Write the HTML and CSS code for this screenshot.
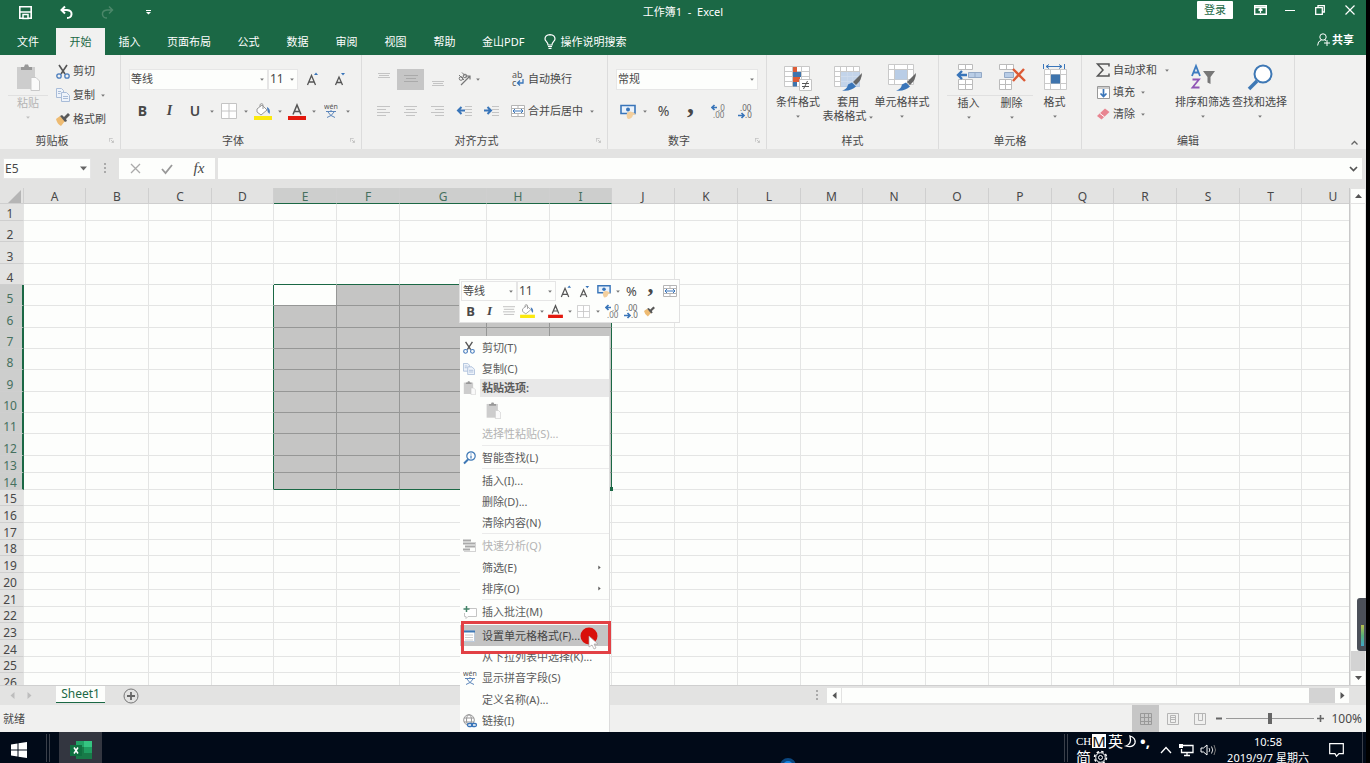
FILE: index.html
```html
<!DOCTYPE html>
<html lang="zh-CN">
<head>
<meta charset="utf-8">
<title>工作簿1 - Excel</title>
<link rel="stylesheet" href="styles.css">
</head>
<body>
<svg class="sprite" aria-hidden="true">
  <symbol id="caret" viewBox="0 0 5 4"><path d="M0 .5h5L2.500 3.500z" fill="#777"/></symbol>
  <symbol id="launch" viewBox="0 0 8 8"><path d="M.5 6V.5H6M3 3l4 4M7 4v3H4" fill="none" stroke="#aaa"/></symbol>
  <symbol id="cut" viewBox="0 0 14 15"><path d="M3 1l6 9M11 1L5 10" stroke="#555" stroke-width="1.600" fill="none"/><circle cx="3" cy="12" r="2.200" fill="none" stroke="#4a7dbd" stroke-width="1.300"/><circle cx="11" cy="12" r="2.200" fill="none" stroke="#4a7dbd" stroke-width="1.300"/></symbol>
  <symbol id="copy" viewBox="0 0 14 14"><path d="M.5.5h5l2 2v7h-7z" fill="#eef3fa" stroke="#a9bcd8"/><path d="M5.500 4.500h5l3 3v6h-8z" fill="#eef3fa" stroke="#a9bcd8"/><path d="M2 3.500h3M2 5.500h2.500M7 8.500h5M7 10.500h5" stroke="#a9bcd8"/></symbol>
  <symbol id="paste" viewBox="0 0 24 27"><path d="M1 3h18v22H1z" fill="#cdcdcd"/><path d="M5 3h3l1-2.500h3L13 3h3v3H5z" fill="#989898"/><path d="M15 13.500h5l3.500 3.500v9.500H15z" fill="#fafafa" stroke="#c9c9c9"/></symbol>
  <symbol id="brush" viewBox="0 0 14 13"><path d="M0 6l4-3 5 5-4 5q-4-2-5-7z" fill="#eebb72"/><path d="M4 3l2-1 2 2 4-4 2 2-4 4 1 2-2 1z" fill="#595959"/></symbol>
  <symbol id="grid4" viewBox="0 0 16 16"><path d="M.5.5h15v15H.5zM8 1v14M1 8h14" fill="#fff" stroke="#c4c4c4"/></symbol>
  <symbol id="bucket" viewBox="0 0 18 17"><path d="M3 6l5-4 5 5-6 5-4-3z" fill="#fff" stroke="#999"/><path d="M6 4V1.500q2-2 3 0V6" fill="none" stroke="#999"/><path d="M13 4q4 2 2.500 7Q13 9 13 5z" fill="#4a7dbd"/><path d="M0 13h18v4H0z" fill="#fbe90f"/></symbol>
  <symbol id="fontcolor" viewBox="0 0 18 17"><path d="M5 11.500L9 2l4 9.500M6.500 8.500h5" fill="none" stroke="#555" stroke-width="1.500"/><path d="M0 13h18v4H0z" fill="#e3190e"/></symbol>
  <symbol id="grow" viewBox="0 0 14 14"><path d="M2.500 13L6.500 3.500l4 9.500M4 10h5" fill="none" stroke="#555" stroke-width="1.300"/><path d="M9 3l2-2.500L13 3z" fill="#3975b9"/></symbol>
  <symbol id="shrink" viewBox="0 0 14 14"><path d="M2.500 13L6 5l3.500 8M4 10.500h4" fill="none" stroke="#555" stroke-width="1.300"/><path d="M8 1l2 2.500L12 1z" fill="#3975b9"/></symbol>
  <symbol id="pinyin" viewBox="0 0 14 14"><text x="7" y="5" text-anchor="middle" font-size="7" fill="#555">wén</text><path d="M2 7.500h10M7 6v2M4 8q2 4 7 5.500M10 8q-2 4-7 5.500" fill="none" stroke="#5c86bb"/></symbol>
  <symbol id="money" viewBox="0 0 16 15"><path d="M1 1.500h14v8H1z" fill="#eaf2fb" stroke="#3975b9" stroke-width="1.600"/><circle cx="8" cy="5.500" r="2" fill="#3975b9"/><path d="M7 9q3-3 7 0l2 1-3 1q-1 4-5 4-2-2-1-6z" fill="#f3cf9d"/></symbol>
  <symbol id="decless" viewBox="0 0 14 15"><path d="M6 3.500H1M3.500 1L1 3.500 3.500 6" fill="none" stroke="#3975b9" stroke-width="1.700"/><text x="7" y="7" font-size="8" fill="#777">.0</text><text x="2" y="14" font-size="8" fill="#777">.00</text></symbol>
  <symbol id="decmore" viewBox="0 0 14 15"><path d="M0 11.500h6M3.500 9L6 11.500 3.500 14" fill="none" stroke="#3975b9" stroke-width="1.700"/><text x="2" y="7" font-size="8" fill="#666">.00</text><text x="7" y="14" font-size="8" fill="#666">.0</text></symbol>
  <symbol id="merge" viewBox="0 0 14 14"><path d="M.5 1.500h13v11H.5zM.5 4.500h13M.5 9.500h13M7 1.500v3M7 9.500v3" fill="#fff" stroke="#b5b5b5"/><path d="M2 7h10M4 5L2 7l2 2M10 5l2 2-2 2" fill="none" stroke="#3975b9"/></symbol>
  <symbol id="lines" viewBox="0 0 14 11"><path d="M0 .5h14M1 3.500h12M0 6.500h14M1 9.500h12" stroke="#b9b9b9"/></symbol>
  <symbol id="tri-left" viewBox="0 0 5 7"><path d="M4.500 0v7L.5 3.500z" fill="currentColor"/></symbol>
  <symbol id="tri-right" viewBox="0 0 5 7"><path d="M.5 0v7l4-3.500z" fill="currentColor"/></symbol>
  <symbol id="tablebrush" viewBox="0 0 28 27"><path d="M.5 2.500h25v20H.5zM.5 7.500h25M.5 12.500h25M.5 17.500h25M6.500 2.500v20M12.500 2.500v20M19.500 2.500v20" fill="#fff" stroke="#c9c9c9"/><path d="M7 8h19v15H7z" fill="#b9cde6" opacity=".85"/><path d="M13 8v14M19 8v14M7 12.500h18M7 17.500h18" stroke="#cfdced"/><path d="M28 9l-9 9 3 3q6-5 6-12z" fill="#666"/><path d="M18 18.500l4 4q-5 5-14 4 5-1 6-6z" fill="#3975b9"/></symbol>
</svg>

<div class="screen">
  <header class="titlebar">
    <div class="quick">
      <button aria-label="保存"><svg width="13" height="13" viewBox="0 0 13 13"><path d="M.8.800h11.400v11.400H.8z" fill="none" stroke="#fff" stroke-width="1.600"/><path d="M1 6h11M4 8.500h5v4H4z" fill="#1b6845" stroke="#fff" stroke-width="1.500"/></svg></button>
      <button aria-label="撤消"><svg width="13" height="13" viewBox="0 0 13 13"><path d="M1 4h6q5 .5 4.500 4.500Q11 12 7 12M5 .5L1.500 4 5 7.500" fill="none" stroke="#fff" stroke-width="2"/></svg></button>
      <button aria-label="恢复"><svg width="13" height="13" viewBox="0 0 13 13"><path d="M12 4H6q-5 .5-4.500 4.500Q2 12 6 12M8 .5L11.500 4 8 7.500" fill="none" stroke="#4b8769" stroke-width="1.500"/></svg></button>
      <button aria-label="自定义快速访问工具栏"><svg width="5" height="5" viewBox="0 0 5 5"><path d="M0 0h5v1H0zM0 2h5L2.500 4.500z" fill="#fff"/></svg></button>
    </div>
    <h1>工作簿1&nbsp; -&nbsp; Excel</h1>
    <div class="window-actions">
      <button class="login">登录</button>
      <button aria-label="功能区显示选项"><svg width="13" height="10" viewBox="0 0 13 10"><path d="M.7.700h11.600v8.600H.7zM1 2.500h11" fill="none" stroke="#fff" stroke-width="1.400"/><path d="M6.500 8V4M4.500 5.500l2-2 2 2" fill="none" stroke="#fff" stroke-width="1.300"/></svg></button>
      <button aria-label="最小化"><svg width="10" height="10"><path d="M0 5.500h10" stroke="#fff"/></svg></button>
      <button aria-label="还原"><svg width="10" height="10"><path d="M.7 2.700h6.600v6.600H.7zM3 2.500V.7h6.300v6.300H7.500" fill="none" stroke="#fff" stroke-width="1.300"/></svg></button>
      <button aria-label="关闭"><svg width="10" height="10"><path d="M.5.5l9 9M9.500.5l-9 9" stroke="#fff" stroke-width="1.200"/></svg></button>
    </div>
  </header>

  <nav class="tabs">
    <button class="file">文件</button>
    <button class="active">开始</button>
    <button>插入</button>
    <button>页面布局</button>
    <button>公式</button>
    <button>数据</button>
    <button>审阅</button>
    <button>视图</button>
    <button>帮助</button>
    <button>金山PDF</button>
    <button class="tell"><svg width="12" height="15" viewBox="0 0 12 15"><path d="M4 11q0-2-1.500-3.300Q1 6 1 5q0-4 5-4.300Q11 1 11 5q0 1-1.500 2.700Q8 9 8 11zM4 12.500h4M4.500 14.300h3" fill="none" stroke="#fff" stroke-width="1.200"/></svg>操作说明搜索</button>
    <button class="share"><svg width="13" height="13" viewBox="0 0 13 13"><circle cx="6" cy="4" r="3.200" fill="none" stroke="#fff"/><path d="M.6 12.500q0-4.500 4-5.500M7.500 7l1.500.5M7 10h6M10 7v6" fill="none" stroke="#fff"/></svg>共享</button>
  </nav>

  <div class="ribbon">
    <section class="group clipboard">
      <div class="body">
        <button class="big muted"><svg width="24" height="27"><use href="#paste"/></svg><span class="rule">粘贴</span><svg class="caret"><use href="#caret"/></svg></button>
        <div class="stack">
          <button><svg width="14" height="15"><use href="#cut"/></svg>剪切</button>
          <button><svg width="14" height="14"><use href="#copy"/></svg>复制<svg class="caret"><use href="#caret"/></svg></button>
          <button><svg width="14" height="13"><use href="#brush"/></svg>格式刷</button>
        </div>
      </div>
      <footer class="with-launch">剪贴板<svg class="launch"><use href="#launch"/></svg></footer>
    </section>

    <section class="group font">
      <div class="body rows">
        <div class="row">
          <div class="combo family"><select aria-label="字体"><option>等线</option></select><svg class="caret"><use href="#caret"/></svg></div>
          <div class="combo size"><select aria-label="字号"><option>11</option></select><svg class="caret"><use href="#caret"/></svg></div>
          <button class="tool wide" aria-label="增大字号"><svg width="14" height="14"><use href="#grow"/></svg></button>
          <button class="tool wide" aria-label="减小字号"><svg width="14" height="14"><use href="#shrink"/></svg></button>
        </div>
        <div class="row">
          <button class="tool glyph bold">B</button>
          <button class="tool glyph italic">I</button>
          <button class="split glyph underline">U<svg class="caret"><use href="#caret"/></svg></button>
          <button class="split" aria-label="边框"><svg width="16" height="16"><use href="#grid4"/></svg><svg class="caret"><use href="#caret"/></svg></button>
          <button class="split" aria-label="填充颜色"><svg width="18" height="17"><use href="#bucket"/></svg><svg class="caret"><use href="#caret"/></svg></button>
          <button class="split" aria-label="字体颜色"><svg width="18" height="17"><use href="#fontcolor"/></svg><svg class="caret"><use href="#caret"/></svg></button>
          <button class="split" aria-label="拼音"><svg width="14" height="14"><use href="#pinyin"/></svg><svg class="caret"><use href="#caret"/></svg></button>
        </div>
      </div>
      <footer class="with-launch">字体<svg class="launch"><use href="#launch"/></svg></footer>
    </section>

    <section class="group align">
      <div class="body rows">
        <div class="row">
          <button class="tool" aria-label="顶端对齐"><svg width="12" height="14"><path d="M0 1.500h12M1 3.500h10M0 5.500h12" stroke="#c4c4c4"/></svg></button>
          <button class="tool pressed" aria-label="垂直居中"><svg width="14" height="12"><path d="M0 2.500h14M2 5.500h10M0 8.500h14" stroke="#aaa"/></svg></button>
          <button class="tool" aria-label="底端对齐"><svg width="12" height="14"><path d="M0 9.500h12M1 11.500h10M0 13.500h12" stroke="#c4c4c4"/></svg></button>
          <button class="tool orient" aria-label="方向"><svg width="14" height="14" viewBox="0 0 14 14"><path d="M3 13L12 4M8.500 4H12v3.500" fill="none" stroke="#777" stroke-width="1.200"/><circle cx="3" cy="6.500" r="1.800" fill="none" stroke="#777"/><circle cx="7" cy="4" r="1.800" fill="none" stroke="#777"/><path d="M1 3l5 5M4 .5l4.500 4.500" stroke="#777"/></svg><svg class="caret"><use href="#caret"/></svg></button>
          <button class="label-tool"><svg width="14" height="16" viewBox="0 0 14 16"><text x="1" y="7" font-size="9" fill="#555">ab</text><text x="1" y="15" font-size="9" fill="#555">c</text><path d="M12 8v4H7M9 9.500L6.500 12 9 14.500" fill="none" stroke="#3975b9" stroke-width="1.300"/></svg>自动换行</button>
        </div>
        <div class="row">
          <button class="tool" aria-label="左对齐"><svg width="13" height="12"><path d="M0 1.500h13M0 4.500h9M0 7.500h13M0 10.500h9" stroke="#c4c4c4"/></svg></button>
          <button class="tool" aria-label="居中"><svg width="13" height="12"><path d="M0 1.500h13M2 4.500h9M0 7.500h13M2 10.500h9" stroke="#c4c4c4"/></svg></button>
          <button class="tool" aria-label="右对齐"><svg width="13" height="12"><path d="M0 1.500h13M4 4.500h9M0 7.500h13M4 10.500h9" stroke="#c4c4c4"/></svg></button>
          <button class="tool" aria-label="减少缩进量"><svg width="15" height="12"><path d="M8 1.500h7M8 4.500h7M8 7.500h7M8 10.500h7" stroke="#c4c4c4"/><path d="M8 5.500H1.500M4.500 2L1 5.500 4.500 9" fill="none" stroke="#3975b9" stroke-width="2"/></svg></button>
          <button class="tool" aria-label="增加缩进量"><svg width="15" height="12"><path d="M8 1.500h7M8 4.500h7M8 7.500h7M8 10.500h7" stroke="#c4c4c4"/><path d="M0 5.500h6.500M3.500 2L7 5.500 3.500 9" fill="none" stroke="#3975b9" stroke-width="2"/></svg></button>
          <button class="label-tool"><svg width="14" height="14"><use href="#merge"/></svg>合并后居中<svg class="caret"><use href="#caret"/></svg></button>
        </div>
      </div>
      <footer class="with-launch">对齐方式<svg class="launch"><use href="#launch"/></svg></footer>
    </section>

    <section class="group number">
      <div class="body rows">
        <div class="row"><div class="combo format"><select aria-label="数字格式"><option>常规</option></select><svg class="caret"><use href="#caret"/></svg></div></div>
        <div class="row">
          <button class="split" aria-label="会计数字格式"><svg width="16" height="15"><use href="#money"/></svg><svg class="caret"><use href="#caret"/></svg></button>
          <button class="tool percent">%</button>
          <button class="tool comma">,</button>
          <button class="tool" aria-label="增加小数位数"><svg width="14" height="15"><use href="#decless"/></svg></button>
          <button class="tool" aria-label="减少小数位数"><svg width="14" height="15"><use href="#decmore"/></svg></button>
        </div>
      </div>
      <footer class="with-launch">数字<svg class="launch"><use href="#launch"/></svg></footer>
    </section>

    <section class="group styles">
      <div class="body">
        <button class="big"><svg width="28" height="27" viewBox="0 0 28 27"><path d="M.5 2.500h25v20H.5zM.5 7.500h25M.5 12.500h25M.5 17.500h25M8.500 2.500v20M17.500 2.500v20" fill="#fff" stroke="#c9c9c9"/><path d="M9 3h4v5H9zM9 13h7v5H9z" fill="#dd5c36"/><path d="M9 8h8v5H9zM9 18h4v4.500H9z" fill="#3e74ad"/><path d="M15.500 15.500h12v11h-12z" fill="#fff" stroke="#c4c4c4"/><path d="M18 19.500h7M18 22.500h7M23.500 17l-4 8" stroke="#555"/></svg><span>条件格式</span><svg class="caret"><use href="#caret"/></svg></button>
        <button class="big"><svg width="28" height="27"><use href="#tablebrush"/></svg><span>套用<br>表格格式&nbsp;<svg class="caret"><use href="#caret"/></svg></span></button>
        <button class="big"><svg width="28" height="27" viewBox="0 0 28 27"><path d="M.5.5h25v20H.5zM.5 5.500h25M.5 15.500h25M6.500.5v20M19.500.5v20" fill="#fff" stroke="#c9c9c9"/><path d="M7 6h12v9.500H7z" fill="#b9cde6"/><path d="M28 9l-9 9 3 3q6-5 6-12z" fill="#666"/><path d="M18 18.500l4 4q-5 5-14 4 5-1 6-6z" fill="#3975b9"/></svg><span>单元格样式</span><svg class="caret"><use href="#caret"/></svg></button>
      </div>
      <footer>样式</footer>
    </section>

    <section class="group cells">
      <div class="body">
        <button class="big"><svg width="28" height="27" viewBox="0 0 28 27"><path d="M3.500.5h14v5h-14zM10.500.5v5M3.500 15.500h14v10h-14zM3.500 20.500h14M10.500 15.500v10" fill="#fff" stroke="#bbb"/><path d="M13.500 8.500h13v5h-13zM20 8.500v5" fill="#b9cde6" stroke="#93a9c6"/><path d="M12 11H3M7 7l-4 4 4 4" fill="none" stroke="#3975b9" stroke-width="2.400"/></svg><span class="rule">插入</span><svg class="caret"><use href="#caret"/></svg></button>
        <button class="big"><svg width="28" height="27" viewBox="0 0 28 27"><path d="M1.500.5h14v5h-14zM8.500.5v5M1.500 15.500h12v10h-12zM1.500 20.500h12M7.500 15.500v10" fill="#fff" stroke="#bbb"/><path d="M6.500 8.500h9v5h-9z" fill="#b9cde6" stroke="#93a9c6"/><path d="M15 5l12 12M26 5L15 17" fill="none" stroke="#dc5a35" stroke-width="2.400"/></svg><span class="rule">删除</span><svg class="caret"><use href="#caret"/></svg></button>
        <button class="big"><svg width="26" height="27" viewBox="0 0 26 27"><path d="M2.500 5.500h22v20h-22zM2.500 10.500h22M2.500 19.500h22M8.500 5.500v20M18.500 5.500v20" fill="#fff" stroke="#c9c9c9"/><path d="M9 10.500h9v9H9z" fill="#3e74ad"/><path d="M4 2.500h16M7 .5l-3 2 3 2M17 .5l3 2-3 2M1.500 0v5M22.500 0v5" fill="none" stroke="#3975b9"/></svg><span>格式</span><svg class="caret"><use href="#caret"/></svg></button>
      </div>
      <footer>单元格</footer>
    </section>

    <section class="group editing">
      <div class="body">
        <div class="stack">
          <button class="sum"><svg width="14" height="14" viewBox="0 0 14 14"><path d="M13 3.500V1H1.500L7 7l-5.500 6H13v-2.500" fill="none" stroke="#555" stroke-width="1.500"/></svg>自动求和<svg class="caret"><use href="#caret"/></svg></button>
          <button><svg width="14" height="13" viewBox="0 0 14 13"><path d="M1.500.5h12v12h-12zM1.500 2h12" fill="#fff" stroke="#999"/><path d="M7.500 3v7M4.500 7.500l3 3 3-3" fill="none" stroke="#3975b9" stroke-width="1.700"/></svg>填充<svg class="caret"><use href="#caret"/></svg></button>
          <button><svg width="14" height="12" viewBox="0 0 14 12"><path d="M1 8l8-7.500 4.500 3.500-8 7.500z" fill="#e88591"/><path d="M4 5.500l4.500 3.500" stroke="#fff"/></svg>清除<svg class="caret"><use href="#caret"/></svg></button>
        </div>
        <button class="big"><svg width="26" height="27" viewBox="0 0 26 27"><path d="M2 12L6 2l4 10M3.500 8.500h5" fill="none" stroke="#3e7cc0" stroke-width="1.800"/><path d="M2.500 15.500h6.500l-6.500 8H9.500" fill="none" stroke="#9055b5" stroke-width="1.800"/><path d="M13 7h12l-4.500 6v7l-3-1.500V13z" fill="#777"/></svg><span>排序和筛选</span><svg class="caret"><use href="#caret"/></svg></button>
        <button class="big"><svg width="26" height="27" viewBox="0 0 26 27"><circle cx="16" cy="10" r="8.500" fill="#fff" stroke="#3e78b5" stroke-width="2"/><path d="M10 17l-8 8" stroke="#3e78b5" stroke-width="3.500"/></svg><span>查找和选择</span><svg class="caret"><use href="#caret"/></svg></button>
      </div>
      <footer>编辑</footer>
    </section>
    <button class="collapse" aria-label="折叠功能区"><svg width="7" height="5"><path d="M.5 4.500l3-3 3 3" fill="none" stroke="#666" stroke-width="1.300"/></svg></button>
  </div>

  <div class="formula">
    <div class="combo namebox"><input aria-label="名称框" value="E5"><svg class="arrow" width="7" height="5"><path d="M0 .5h7L3.500 4.500z" fill="#666"/></svg></div>
    <svg class="grip" width="2" height="11"><path d="M1 0v11" stroke="#aaa" stroke-width="2" stroke-dasharray="2 2"/></svg>
    <div class="entry-actions">
      <button aria-label="取消"><svg width="11" height="11"><path d="M1 1l9 9M10 1l-9 9" stroke="#aaa" stroke-width="1.300"/></svg></button>
      <button aria-label="输入"><svg width="12" height="10"><path d="M1 5l3.500 4L11 1" fill="none" stroke="#999" stroke-width="1.800"/></svg></button>
      <button class="fx">fx</button>
    </div>
    <div class="entry"><input aria-label="编辑栏"><svg width="9" height="6"><path d="M1 1l3.500 3.500L8 1" fill="none" stroke="#555" stroke-width="1.700"/></svg></div>
  </div>

  <main class="sheet">
    <div class="grid"><table id="cells"></table></div>
    <div class="vscroll">
      <button aria-label="向上滚动"><svg width="7" height="4"><path d="M0 4h7L3.500 0z" fill="#555"/></svg></button>
      <div class="thumb"></div>
      <div class="track"></div>
      <button aria-label="向下滚动"><svg width="7" height="4"><path d="M0 0h7L3.500 4z" fill="#555"/></svg></button>
      <div class="meter"><i></i></div>
    </div>
  </main>

  <div class="sheetbar">
    <button class="nav" aria-label="上一张"><svg width="5" height="7"><use href="#tri-left"/></svg></button>
    <button class="nav" aria-label="下一张"><svg width="5" height="7"><use href="#tri-right"/></svg></button>
    <button class="sheet-tab">Sheet1</button>
    <button class="add" aria-label="新工作表"><svg width="16" height="16"><circle cx="8" cy="8" r="7" fill="none" stroke="#777"/><path d="M8 4v8M4 8h8" stroke="#666" stroke-width="1.800"/></svg></button>
    <svg class="grip" width="2" height="11"><path d="M1 0v11" stroke="#aaa" stroke-width="2" stroke-dasharray="2 2"/></svg>
    <div class="hscroll">
      <button aria-label="向左滚动"><svg width="5" height="7"><use href="#tri-left"/></svg></button>
      <div class="thumb"></div>
      <div class="track"></div>
      <button aria-label="向右滚动"><svg width="5" height="7"><use href="#tri-right"/></svg></button>
    </div>
  </div>

  <div class="status">
    <span class="ready">就绪</span>
    <button class="view pressed" aria-label="普通"><svg width="12" height="12"><path d="M.5.5h11v11H.5zM4.500 0v12M8.500 0v12M0 4.500h12M0 8.500h12" fill="none" stroke="#999"/></svg></button>
    <button class="view" aria-label="页面布局"><svg width="12" height="12"><path d="M.5.5h11v11H.5zM3.500 2.500h5v7h-5zM4 4.500h4M4 6.500h4" fill="none" stroke="#b5b5b5"/></svg></button>
    <button class="view" aria-label="分页预览"><svg width="12" height="12"><path d="M.5.5h11v11H.5zM4.500 0v7.500h4V0" fill="none" stroke="#b5b5b5"/></svg></button>
    <button class="zoom-step" aria-label="缩小"><svg width="7" height="7"><path d="M0 3.500h6" stroke="#666" stroke-width="2"/></svg></button>
    <input type="range" aria-label="显示比例" min="0" max="100" value="50">
    <button class="zoom-step" aria-label="放大"><svg width="7" height="7"><path d="M0 3.500h7M3.500 0v7" stroke="#666" stroke-width="1.600"/></svg></button>
    <span class="percent-label">100%</span>
  </div>

  <footer class="taskbar">
    <button class="start" aria-label="开始菜单"><svg width="16" height="16" viewBox="0 0 16 16"><path d="M0 2.500l6.500-1v6H0zM7.500 1.300L16 0v7.500H7.500zM0 8.500h6.500v6L0 13.500zM7.500 8.500H16V16l-8.500-1.300z" fill="#fff"/></svg></button>
    <i class="double"></i>
    <button class="app" aria-label="Excel"><svg width="22" height="18" viewBox="0 0 22 18"><path d="M6 0h16v18H6z" fill="#187a48"/><path d="M6 0h8v6H6z" fill="#21a366"/><path d="M14 0h8v6h-8z" fill="#35c481"/><path d="M14 6h8v6h-8z" fill="#1f9d60"/><path d="M0 4h12v11H0z" fill="#0f7040"/><path d="M4 6.500l4 6M8 6.500l-4 6" stroke="#fff" stroke-width="1.500"/></svg></button>
    <span class="glow"></span>
    <i class="double right"></i>
    <div class="ime"><div><small>CH</small><b>M</b><span>英</span><svg width="11" height="13" viewBox="0 0 11 13"><path d="M5 1q6 2 5 7-2 5-9 3 6-2 4-10z" fill="none" stroke="#fff" stroke-width="1.300"/></svg><span class="dots">•,</span></div><div><span>简</span><svg width="15" height="15" viewBox="0 0 15 15"><circle cx="7.500" cy="7.500" r="6" fill="none" stroke="#fff" stroke-width="1.500" stroke-dasharray="2.500 2.210"/><circle cx="7.500" cy="7.500" r="4.800" fill="none" stroke="#fff"/><circle cx="7.500" cy="7.500" r="2" fill="none" stroke="#fff"/></svg></div></div>
    <div class="tray">
      <svg width="12" height="8"><path d="M1 7l5-5.500L11 7" fill="none" stroke="#fff" stroke-width="1.300"/></svg>
      <svg width="16" height="14"><path d="M4 2.500h11v7H3.500V6M9 9.500v3M6 12.500h6" fill="none" stroke="#fff" stroke-width="1.300"/><path d="M1 1h4v4H1z" fill="#fff"/></svg>
      <svg width="16" height="14"><path d="M1 5h2.500L7 2v10L3.500 9H1z" fill="none" stroke="#fff"/><path d="M9 5q1.500 2 0 4M11.500 3.500q2.500 3.500 0 7" fill="none" stroke="#ddd"/><path d="M14 2q3 5 0 10" fill="none" stroke="#777"/></svg>
    </div>
    <time><span>10:58</span><span>2019/9/7 星期六</span></time>
    <button class="notice" aria-label="通知"><svg width="15" height="15"><path d="M.7 1.700h13.600v10H10l-2.500 2.500L6 11.700H.7z" fill="none" stroke="#fff" stroke-width="1.200"/></svg></button>
    <i class="desktop-edge"></i>
  </footer>

  <div class="mini">
    <div class="row">
      <div class="combo family"><select aria-label="字体"><option>等线</option></select><svg class="caret"><use href="#caret"/></svg></div>
      <div class="combo size"><select aria-label="字号"><option>11</option></select><svg class="caret"><use href="#caret"/></svg></div>
      <button aria-label="增大字号"><svg width="13" height="13"><use href="#grow"/></svg></button>
      <button aria-label="减小字号"><svg width="13" height="13"><use href="#shrink"/></svg></button>
      <button class="pair" aria-label="会计数字格式"><svg width="14" height="14"><use href="#money"/></svg><svg class="caret"><use href="#caret"/></svg></button>
      <button class="percent">%</button>
      <button class="comma">,</button>
      <button aria-label="合并后居中"><svg width="14" height="14"><use href="#merge"/></svg></button>
    </div>
    <div class="row">
      <button class="bold">B</button>
      <button class="italic">I</button>
      <button aria-label="居中"><svg width="12" height="10"><use href="#lines"/></svg></button>
      <button class="pair" aria-label="填充颜色"><svg width="15" height="14"><use href="#bucket"/></svg><svg class="caret"><use href="#caret"/></svg></button>
      <button class="pair" aria-label="字体颜色"><svg width="15" height="14"><use href="#fontcolor"/></svg><svg class="caret"><use href="#caret"/></svg></button>
      <button class="pair" aria-label="边框"><svg width="13" height="13"><use href="#grid4"/></svg><svg class="caret"><use href="#caret"/></svg></button>
      <button aria-label="增加小数位数"><svg width="14" height="15"><use href="#decless"/></svg></button>
      <button aria-label="减少小数位数"><svg width="14" height="15"><use href="#decmore"/></svg></button>
      <button aria-label="格式刷"><svg width="11" height="11"><use href="#brush"/></svg></button>
    </div>
  </div>

  <div class="menu" role="menu">
    <button><svg width="12" height="13"><use href="#cut"/></svg>剪切(T)</button>
    <button><svg width="12" height="12"><use href="#copy"/></svg>复制(C)</button>
    <div class="heading"><svg width="13" height="14"><use href="#paste"/></svg><b>粘贴选项:</b></div>
    <button class="paste-option" aria-label="粘贴"><svg width="15" height="17"><use href="#paste"/></svg></button>
    <button class="tall" disabled><i></i>选择性粘贴(S)...</button>
    <hr>
    <button><svg width="13" height="13" viewBox="0 0 13 13"><circle cx="8" cy="5" r="4.200" fill="#fff" stroke="#3e78b5" stroke-width="1.200"/><path d="M5 8.500L1 12.500" stroke="#3e78b5" stroke-width="2"/><path d="M8 2.500v1M8 4.500v3" stroke="#3e78b5" stroke-width="1.200"/></svg>智能查找(L)</button>
    <hr>
    <button><i></i>插入(I)...</button>
    <button><i></i>删除(D)...</button>
    <button><i></i>清除内容(N)</button>
    <hr>
    <button class="tall" disabled><svg width="13" height="12"><path d="M0 .5h8M0 3.500h13M2 6.500h10M0 9.500h7" stroke="#aaa" stroke-width="2"/><path d="M1 11.500h12M12.500 2v9" stroke="#d3d3d3"/></svg>快速分析(Q)</button>
    <button><i></i>筛选(E)<svg class="more" width="3" height="5"><use href="#tri-right"/></svg></button>
    <button><i></i>排序(O)<svg class="more" width="3" height="5"><use href="#tri-right"/></svg></button>
    <hr>
    <button class="tall"><svg width="14" height="13" viewBox="0 0 14 13"><path d="M6 2.500h7.500v8H5l-2 2v-2H1.500V7" fill="#fff" stroke="#c4c4c4"/><path d="M3.500 0v6M.5 3h6" stroke="#438368" stroke-width="1.500"/></svg>插入批注(M)</button>
    <hr>
    <button class="chosen"><svg width="12" height="12"><path d="M.5.5h11v11H.5z" fill="#fff" stroke="#bccadb"/><path d="M0 1.500h12" stroke="#3e78b5" stroke-width="2"/><path d="M2 5h8M2 7.500h8M2 10h8" stroke="#ccc"/></svg>设置单元格格式(F)...</button>
    <button><i></i>从下拉列表中选择(K)...</button>
    <button class="tall"><svg width="14" height="14"><use href="#pinyin"/></svg>显示拼音字段(S)</button>
    <button><i></i>定义名称(A)...</button>
    <button class="tall"><svg width="14" height="14" viewBox="0 0 14 14"><circle cx="6" cy="6" r="5.300" fill="#fff" stroke="#999"/><ellipse cx="6" cy="6" rx="2.500" ry="5.300" fill="none" stroke="#999"/><path d="M1 4h10M1 8h10" stroke="#999"/><rect x="4.500" y="9.500" width="5" height="3" rx="1.500" fill="#fff" stroke="#3975b9" stroke-width="1.300"/><rect x="8.500" y="9.500" width="5" height="3" rx="1.500" fill="none" stroke="#3975b9" stroke-width="1.300"/></svg>链接(I)</button>
    <div class="focus-frame"></div>
    <svg class="pointer" width="18" height="23"><circle cx="9" cy="9" r="8.500" fill="#d9100a"/><path d="M9 9v11l3-2 2 4 2-1-2-4h4z" fill="#fff" stroke="#a9a0a0" stroke-width=".7"/></svg>
  </div>
</div>
<script src="script.js"></script>
</body>
</html>
```
FILE: styles.css
```css
* { box-sizing: border-box; }
body {
  margin: 0;
  background: #000;
  font: 11px/14px "Noto Sans", "Noto Sans CJK SC", sans-serif;
  color: #484848;
}
button, input, select {
  font: inherit;
  color: inherit;
  background: none;
  border: 0;
  border-radius: 0;
  margin: 0;
  padding: 0;
  outline: 0;
}
button { display: flex; align-items: center; justify-content: center; white-space: nowrap; flex: none; }
svg { flex: none; display: block; overflow: visible; }
h1 { margin: 0; font-size: 11px; font-weight: 400; }
.sprite { display: none; }
.caret { width: 4px; height: 3px; }
.screen {
  position: relative;
  height: 100vh;
  display: flex;
  flex-direction: column;
  padding-right: 4px;
  overflow: hidden;
}

/* title bar and tabs */
.titlebar { display: grid; grid-template-columns: 1fr auto 1fr; background: #1b6845; color: #fff; height: 28px; flex: none; padding-bottom: 4px; }
.titlebar h1 { align-self: center; }
.quick { display: flex; padding-left: 5px; }
.quick button { width: 41px; }
.window-actions { display: flex; justify-content: flex-end; align-items: center; height: 19px; padding-right: 1px; }
.window-actions button { width: 30px; height: 18px; }
.window-actions .login { width: 36px; background: #fff; color: #1b6845; margin-right: 12px; border-radius: 1px; }
.tabs { display: flex; height: 27px; flex: none; background: #1b6845; }
.tabs button { min-width: 49px; padding: 0 13px; color: #fff; }
.tabs .file { width: 56px; }
.tabs .active { background: #f1f1f0; color: #1b6845; }
.tabs .tell { padding: 0 7px; gap: 4px; }
.tabs .share { margin-left: auto; padding: 0 12px 4px; gap: 2px; font-weight: 600; }

/* ribbon */
.ribbon { display: flex; height: 94px; flex: none; background: #f1f1f0; }
.group { display: flex; flex-direction: column; border-right: 1px solid #dcdcdc; flex: none; }
.group .body { display: flex; height: 78px; padding-left: 8px; }
.group footer { position: relative; text-align: center; line-height: 17px; }
.group .with-launch { padding-right: 16px; }
.launch { position: absolute; right: 6px; top: 6px; width: 5px; height: 5px; }
.clipboard { width: 121px; }
.font { width: 241px; }
.align { width: 246px; }
.number { width: 159px; }
.styles { width: 172px; }
.cells { width: 143px; }
.editing { width: 213px; }
.group .rows { flex-direction: column; padding-top: 13px; gap: 10px; }
.row { display: flex; align-items: center; height: 22px; }
.big { flex-direction: column; justify-content: flex-start; padding-top: 9px; }
.big > span { margin-top: 4px; text-align: center; }
.big > .rule { align-self: stretch; border-top: 1px solid #e0e0e0; }
.big > .caret { margin-top: 6px; }
.big span .caret { display: inline-block; vertical-align: middle; }
.muted { color: #b4b4b4; }
.muted .caret { opacity: .4; }
.stack { display: flex; flex-direction: column; }
.stack button { gap: 3px; justify-content: flex-start; height: 22px; }
.stack .caret { margin-left: 3px; }
.stack .sum .caret { margin-left: 5px; }
.clipboard .big { width: 40px; }
.clipboard .stack { padding: 4px 0 0 8px; }
.clipboard .stack button { height: 24px; }
.styles .big { width: 54px; }
.styles .big:first-child { width: 46px; }
.cells .big { width: 43px; }
.group.editing .body { padding-left: 14px; }
.editing .stack { width: 78px; padding-top: 4px; }
.editing .big { width: 57px; }
.collapse { margin: auto 8px 4px auto; }

.combo { display: flex; align-items: center; height: 21px; background: #fdfefc; border: 1px solid #e6e6e6; flex: none; padding: 0 3px 0 1px; }
.combo select, .combo input { appearance: none; flex: 1; width: 0; min-width: 0; }
.combo.family { width: 139px; }
.combo.size { width: 30px; font-size: 12px; }
.combo.format { width: 142px; }
.tool { width: 27px; height: 21px; }
.tool.wide { width: 28px; }
.split { width: 34px; height: 21px; display: grid; grid-template-columns: 24px 10px; justify-items: center; }
.glyph { font-size: 14px; font-weight: 600; }
.bold { font-weight: 700; }
.italic { font-family: "Liberation Serif", serif; font-style: italic; font-weight: 700; }
.percent { font-size: 14px; }
.comma { font-family: "Liberation Serif", serif; font-size: 28px; font-weight: 700; line-height: 8px; padding-bottom: 14px; }
.pressed { background: #c6c6c6; }
.orient { width: 54px; gap: 4px; justify-content: flex-start; padding-left: 7px; }
.label-tool { gap: 3px; padding-left: 6px; }
.label-tool .caret { margin-left: 4px; }

/* formula bar */
.formula { display: flex; align-items: center; height: 39px; flex: none; background: #e3e3e2; padding: 0 4px 0 3px; }
.combo.namebox { width: 88px; font-size: 12px; }
.formula .grip { margin: 0 13px; }
.entry-actions { display: flex; width: 96px; height: 21px; background: #fdfefc; margin-right: 3px; }
.entry-actions button { flex: 1; }
.fx { font: italic 15px "Liberation Serif", serif; }
.entry { display: flex; flex: 1; align-items: center; height: 21px; padding-right: 4px; background: #fdfefc; }
.entry input { flex: 1; }

/* worksheet */
.sheet { display: flex; flex: 1; min-height: 0; background: #e3e3e2; border-bottom: 1px solid #cfcfcf; }
.grid { flex: 1; min-width: 0; overflow: hidden; border-right: 1px solid #c9c9c9; }
.grid table { table-layout: fixed; border-collapse: separate; border-spacing: 0; width: 0; background: #fdfefc; font-size: 12px; }
.grid th, .grid td { padding: 0; border: solid #e4e5e4; border-width: 0 1px 1px 0; overflow: hidden; }
.grid th { background: #e3e3e2; font-weight: 400; line-height: 13px; }
.grid thead th { border-color: #cfcfcf; height: 16px; vertical-align: bottom; }
.grid tbody th { vertical-align: bottom; text-align: center; padding-right: 3px; border-bottom-color: #cfcfcf; }
.grid th.on { background: #cdcecd; color: #46705e; }
.grid thead th.on { border-bottom-color: #1b6845; }
.grid tbody th.on { border-right: 2px solid #1b6845; padding-right: 2px; }
.grid td.sel { background: #c5c5c4; border-color: #969796; }
.grid td.first { background: #fdfefc; }
.grid td.edge-right { border-right-color: #1b6845; }
.grid td.edge-bottom { border-bottom-color: #1b6845; }
.grid td.handle { position: relative; overflow: visible; }
.grid td.handle::after { content: ""; position: absolute; right: -2px; bottom: -2px; width: 4px; height: 4px; background: #1b6845; }
.short { height: 16px; }
.mid { height: 17px; }
.high { height: 21px; }
.higher { height: 22px; }
.corner svg { margin: 0 2px 0 auto; }
.vscroll { position: relative; display: flex; flex-direction: column; width: 16px; padding: 1px 1px 0; }
.vscroll button { height: 14px; background: #fdfefc; }
.vscroll .thumb { flex: 1; margin-top: 1px; background: #fdfefc; }
.vscroll .track { height: 20px; background: #d3d3d3; }
.meter { position: absolute; right: 0; bottom: 34px; width: 9px; height: 53px; background: #4b5059; border-radius: 3px 0 0 3px; padding: 27px 2px 5px 4px; }
.meter i { display: block; height: 21px; background: linear-gradient(#b9c04d, #57b078, #3fa6c9); }

/* sheet tabs and status */
.sheetbar { display: flex; align-items: center; height: 19px; flex: none; background: #e3e3e2; padding-left: 4px; }
.nav { width: 17px; color: #bdbdbd; }
.sheet-tab { align-self: flex-start; width: 49px; height: 17px; margin-left: 18px; background: #fdfefc; color: #1b6845; font-size: 12px; border-bottom: 1px solid #1b6845; }
.add { margin-left: 18px; }
.sheetbar .grip { margin-left: auto; margin-right: 9px; }
.hscroll { display: flex; flex: 0 0 522px; height: 15px; margin-right: 17px; }
.hscroll button { width: 14px; background: #fdfefc; color: #555; }
.hscroll .thumb { flex: 1; margin-left: 1px; background: #fdfefc; }
.hscroll .track { width: 26px; background: #d3d3d3; }
.status { display: flex; align-items: center; height: 27px; flex: none; background: #f0f0ef; padding: 0 4px 0 3px; }
.ready { margin-right: auto; }
.view { width: 27px; height: 27px; }
.zoom-step { width: 13px; }
.status input { appearance: none; width: 88px; height: 11px; background: linear-gradient(#999, #999) center / 100% 1px no-repeat; }
.status input::-webkit-slider-thumb { appearance: none; width: 4px; height: 11px; background: #666; }
.percent-label { font-size: 12px; margin-left: 4px; }

/* taskbar */
.taskbar { display: flex; align-items: center; height: 31px; flex: none; padding-right: 3px; background: #010a18; color: #fff; overflow: hidden; position: relative; }
.start { width: 38px; padding-top: 4px; }
.double { width: 4px; height: 28px; border: solid #3a3f49; border-width: 0 1px; margin: 0 9px 0 8px; }
.app { width: 43px; height: 31px; background: #333640; padding-top: 4px; }
.glow { position: absolute; left: 780px; bottom: -11px; width: 16px; height: 16px; border-radius: 50%; background: #1584e0; border: 3px solid #0b4780; }
.double.right { margin: 0 8px 0 auto; }
.ime { display: flex; flex-direction: column; width: 84px; height: 31px; font-size: 15px; line-height: 17px; }
.ime div { display: flex; align-items: center; height: 16px; flex: none; gap: 2px; padding-top: 2px; }
.ime small { font: 11px "Liberation Serif", serif; width: 14px; }
.ime b { font-weight: 400; background: #fff; color: #111; width: 14px; height: 14px; line-height: 14px; text-align: center; }
.ime .dots { font-size: 15px; font-weight: 700; margin-left: 2px; }
.tray { display: flex; align-items: center; gap: 6px; padding-top: 4px; }
time { display: flex; flex-direction: column; align-items: center; width: 104px; align-self: flex-start; padding-top: 2px; line-height: 16px; white-space: nowrap; }
.notice { width: 33px; padding-top: 4px; }
.desktop-edge { width: 1px; height: 31px; margin-left: 9px; background: #3a3f49; }

/* floating toolbar */
.mini { position: absolute; left: 459px; top: 279px; width: 221px; height: 44px; background: #fdfefc; border: 1px solid #e0e0e0; padding: 1px; }
.mini .row { height: 20px; }
.mini button { width: 19px; height: 19px; }
.mini button.bold, .mini button.italic { font-size: 13px; }
.mini .pair { width: 28px; display: grid; grid-template-columns: 19px 9px; justify-items: center; }
.mini .combo { height: 20px; }
.mini .family { width: 56px; }
.mini .size { width: 39px; }
.mini .percent { font-size: 13px; }
.mini .comma { font-size: 24px; }

/* context menu */
.menu { position: absolute; left: 460px; top: 336px; width: 150px; background: #fdfefc; border-right: 1px solid #dcdcdc; padding-top: 1px; color: #5b5b5b; }
.menu button { width: 100%; height: 21px; display: grid; grid-template-columns: 20px 1fr auto; justify-items: start; text-align: left; }
.menu button.tall { height: 22px; }
.menu button:disabled { color: #b4b4b4; }
.menu button > svg:first-child, .heading svg { margin-left: 3px; }
.menu hr { height: 1px; margin: 0 0 1px 22px; border: 0; background: #ebebeb; }
.menu button, .heading { padding-left: 0; column-gap: 2px; }
.heading { display: grid; grid-template-columns: 20px 1fr; align-items: center; height: 18px; }
.heading b { background: #e8e8e8; line-height: 18px; padding-left: 2px; margin-left: -2px; font-weight: 600; }
.menu .paste-option { height: 26px; display: flex; justify-content: flex-start; padding-left: 23px; }
.menu .chosen { background: #c4c4c4; color: #444; }
.more { margin-right: 8px; }
.focus-frame { position: absolute; left: 1px; top: 285px; width: 150px; height: 33px; border: 3px solid #e24145; }
.pointer { position: absolute; left: 120px; top: 291px; }
```
FILE: script.js
```js
const columns = [...'ABCDEFGHIJKLMNOPQRSTU'];
const widths = [62, 63, 63, 62, 63, 63, 87, 63, 62, 63, 63, 63, 62, 63, 63, 63, 62, 63, 63, 62, 63];
const rowSizes = ['mid', 'high', 'higher', 'high', 'high', 'higher', 'high', 'high', 'higher', 'high', 'high', 'higher',
  'mid', 'mid', 'short', 'mid', 'mid', 'short', 'mid', 'mid', 'mid', 'short', 'mid', 'mid', 'short', 'mid'];
const first = { col: 4, row: 5 };
const last = { col: 8, row: 14 };

const inCols = c => c >= first.col && c <= last.col;
const inRows = r => r >= first.row && r <= last.row;

function cellClass(c, r) {
  const names = [];
  if (inCols(c) && inRows(r)) names.push('sel');
  if (c === first.col && r === first.row) names.push('first');
  if ((c === first.col - 1 || c === last.col) && inRows(r)) names.push('edge-right');
  if ((r === first.row - 1 || r === last.row) && inCols(c)) names.push('edge-bottom');
  if (c === last.col && r === last.row) names.push('handle');
  return names.join(' ');
}

const cols = '<col style="width:24px">' + widths.map(w => `<col style="width:${w}px">`).join('');
const corner = '<th class="corner"><svg width="13" height="13"><path d="M13 0v13H0z" fill="#b5b5b5"/></svg></th>';
const head = columns.map((name, c) => `<th class="${inCols(c) ? 'on' : ''}">${name}</th>`).join('');
const body = rowSizes.map((size, i) => {
  const r = i + 1;
  const cells = columns.map((_, c) => `<td class="${cellClass(c, r)}"></td>`).join('');
  return `<tr class="${size}"><th class="${inRows(r) ? 'on' : ''}">${r}</th>${cells}</tr>`;
}).join('');

document.getElementById('cells').innerHTML =
  `<colgroup>${cols}</colgroup><thead><tr>${corner}${head}</tr></thead><tbody>${body}</tbody>`;
```
